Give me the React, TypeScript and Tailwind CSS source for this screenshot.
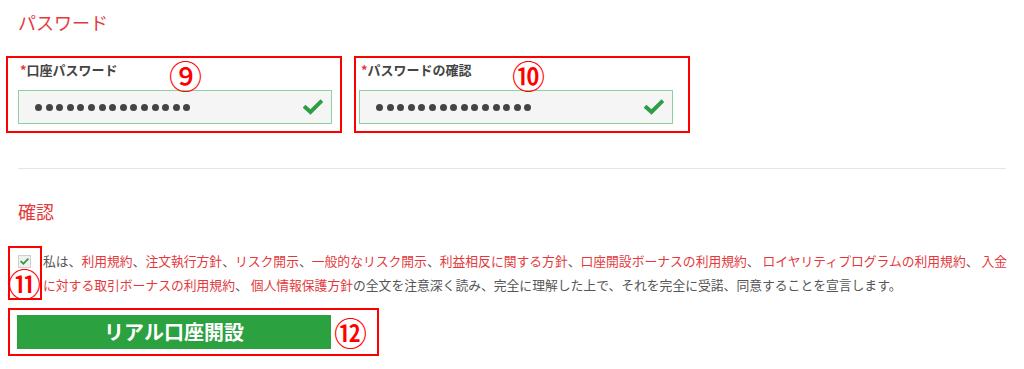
import { Fragment } from "react";

const RED = "text-[#e4393c]";

function CheckMark({ className }: { className?: string }) {
  return (
    <svg viewBox="0 0 20 16" className={className} fill="none">
      <path d="M2.5 8.5 L7.5 13 L17.5 3" stroke="currentColor" strokeWidth="4" strokeLinecap="square" />
    </svg>
  );
}

function PasswordField({ label }: { label: string }) {
  return (
    <div className="w-[314px]">
      <div className="h-[18px] pl-[2px] text-[13px] leading-[18px] font-bold text-[#444]">
        <span className={RED}>*</span>
        {label}
      </div>
      <div className="mt-[11px] flex h-[34px] items-center justify-between border border-[#8fd19e] bg-[#f5f5f5] pl-[16px] pr-[8px]">
        <div className="flex gap-[3.6px]">
          {Array.from({ length: 15 }).map((_, i) => (
            <span key={i} className="h-[7px] w-[7px] rounded-full bg-[#444]" />
          ))}
        </div>
        <CheckMark className="h-[16px] w-[20px] text-[#2e9e44]" />
      </div>
    </div>
  );
}

// [text, is link]; "\n" marks the line break seen in the reference
const terms: [string, boolean][] = [
  ["私は、", false],
  ["利用規約", true],
  ["、", false],
  ["注文執行方針", true],
  ["、", false],
  ["リスク開示", true],
  ["、", false],
  ["一般的なリスク開示", true],
  ["、", false],
  ["利益相反に関する方針", true],
  ["、", false],
  ["口座開設ボーナスの利用規約", true],
  ["、 ", false],
  ["ロイヤリティプログラムの利用規約", true],
  ["、 ", false],
  ["入金", true],
  ["\n", false],
  ["に対する取引ボーナスの利用規約", true],
  ["、 ", false],
  ["個人情報保護方針", true],
  ["の全文を注意深く読み、完全に理解した上で、それを完全に受諾、同意することを宣言します。", false],
];

export default function App() {
  return (
    <div className="relative h-[369px] w-[1024px] overflow-hidden bg-white font-['Noto_Sans_CJK_JP','Noto_Sans',sans-serif]">
      <div className="px-[18px]">
        <h2 className={`mt-[10px] h-[24px] text-[18px] leading-[24px] font-normal ${RED}`}>パスワード</h2>

        <div className="mt-[27px] flex gap-[27px]">
          <PasswordField label="口座パスワード" />
          <PasswordField label="パスワードの確認" />
        </div>

        <hr className="mt-[44px] border-t border-[#e5e5e5]" />

        <h2 className={`mt-[30px] h-[24px] text-[18px] leading-[24px] font-normal ${RED}`}>確認</h2>

        <div className="mt-[26px] flex gap-[12px]">
          <div className="mt-[6px] flex h-[13px] w-[13px] shrink-0 items-center justify-center border border-[#cfcfcf] bg-[#f0f0f0]">
            <CheckMark className="h-[7px] w-[9px] text-[#2e9e44]" />
          </div>
          <p className="w-[990px] whitespace-nowrap text-[12.8px] leading-[24px] text-[#555]">
            {terms.map(([t, link], i) => (
              <Fragment key={i}>{t === "\n" ? <br /> : link ? <span className={RED}>{t}</span> : t}</Fragment>
            ))}
          </p>
        </div>

        <button className="mt-[18px] ml-[-1px] flex h-[34px] w-[314px] items-center justify-center bg-[#2ba13f] text-[20px] font-bold text-white">
          リアル口座開設
        </button>
      </div>

      {/* annotations */}
      <div className="pointer-events-none absolute left-[6px] top-[56px] h-[77px] w-[336px] border-2 border-[#ff0000]" />
      <div className="pointer-events-none absolute left-[354px] top-[56px] h-[77px] w-[336px] border-2 border-[#ff0000]" />
      <div className="pointer-events-none absolute left-[8px] top-[246px] h-[54px] w-[34px] border-2 border-[#ff0000]" />
      <div className="pointer-events-none absolute left-[8px] top-[308px] h-[48px] w-[371px] border-2 border-[#ff0000]" />

      <span className="absolute left-[169px] top-[58px] text-[33px] leading-[34px] font-medium text-[#ff0000]">⑨</span>
      <span className="absolute left-[512px] top-[58px] text-[33px] leading-[34px] font-medium text-[#ff0000]">⑩</span>
      <span className="absolute left-[8px] top-[266px] text-[33px] leading-[34px] font-medium text-[#ff0000]">⑪</span>
      <span className="absolute left-[334px] top-[315px] text-[33px] leading-[34px] font-medium text-[#ff0000]">⑫</span>
    </div>
  );
}
